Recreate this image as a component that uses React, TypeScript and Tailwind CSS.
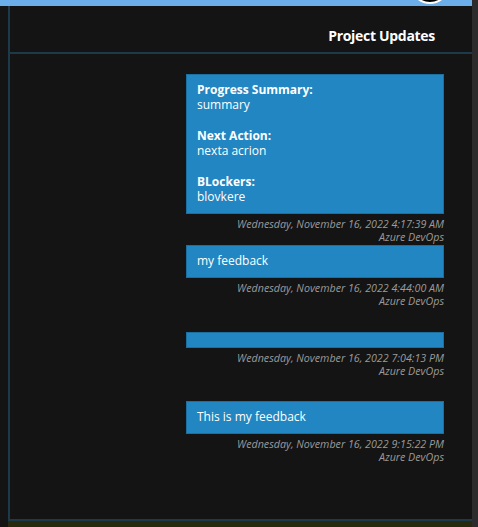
const font = { fontFamily: '"Open Sans", "Noto Sans", sans-serif' };

type Entry = { body: React.ReactNode; when: string; gap: string; empty?: boolean };

const entries: Entry[] = [
  {
    body: (
      <>
        <p className="font-bold">Progress Summary:</p>
        <p>summary</p>
        <p className="mt-[16px] font-bold">Next Action:</p>
        <p>nexta acrion</p>
        <p className="mt-[16px] font-bold">BLockers:</p>
        <p>blovkere</p>
      </>
    ),
    when: "Wednesday, November 16, 2022 4:17:39 AM",
    gap: "mt-0",
  },
  { body: <p>my feedback</p>, when: "Wednesday, November 16, 2022 4:44:00 AM", gap: "mt-[2px]" },
  { body: null, when: "Wednesday, November 16, 2022 7:04:13 PM", gap: "mt-[25px]", empty: true },
  { body: <p>This is my feedback</p>, when: "Wednesday, November 16, 2022 9:15:22 PM", gap: "mt-[24px]" },
];

export default function App() {
  return (
    <div className="relative flex h-[527px] w-[478px] overflow-hidden bg-[#141414]" style={font}>
      <div className="flex w-[472px] flex-col">
        {/* top bar */}
        <div className="h-[6px] bg-[#6caeea]" />

        <div className="flex flex-1">
          <div className="w-[8px]" />
          <div className="flex flex-1 flex-col border-b-2 border-l-2 border-[#1d3a4b]">
            <div className="flex h-[48px] items-end justify-end border-b-2 border-[#1d3a4b] pb-[6px] pr-[37px]">
              <h1 className="text-[14px] font-bold leading-[20px] tracking-[-0.3px] text-white">Project Updates</h1>
            </div>

            <div className="flex flex-col items-end pr-[28px] pt-[20px]">
              {entries.map((e, i) => (
                <div key={i} className={`w-[258px] ${e.gap}`}>
                  <div
                    className={
                      e.empty
                        ? "h-[16px] border border-[#1c6fa1] bg-[#2186c1]"
                        : "border border-[#1c6fa1] bg-[#2186c1] pb-[9px] pl-[10px] pr-2 pt-[7px] text-[12px] leading-[15px] text-white"
                    }
                  >
                    {e.body}
                  </div>
                  <div className="mt-[4px] text-right text-[10.7px] italic leading-[12.5px] text-[#9b9b9b]">
                    <p>{e.when}</p>
                    <p>Azure DevOps</p>
                  </div>
                </div>
              ))}
            </div>
          </div>
        </div>

        {/* footer */}
        <div className="flex h-[6px]">
          <div className="w-[8px]" />
          <div className="flex-1 bg-[#272a0d]" />
        </div>
      </div>

      {/* scrollbar strip */}
      <div className="w-[6px] bg-[#2c2c2c]" />

      {/* avatar peeking from top */}
      <div className="absolute left-[410px] top-[-36px] h-[40px] w-[40px] rounded-full border-2 border-white bg-black" />
    </div>
  );
}
